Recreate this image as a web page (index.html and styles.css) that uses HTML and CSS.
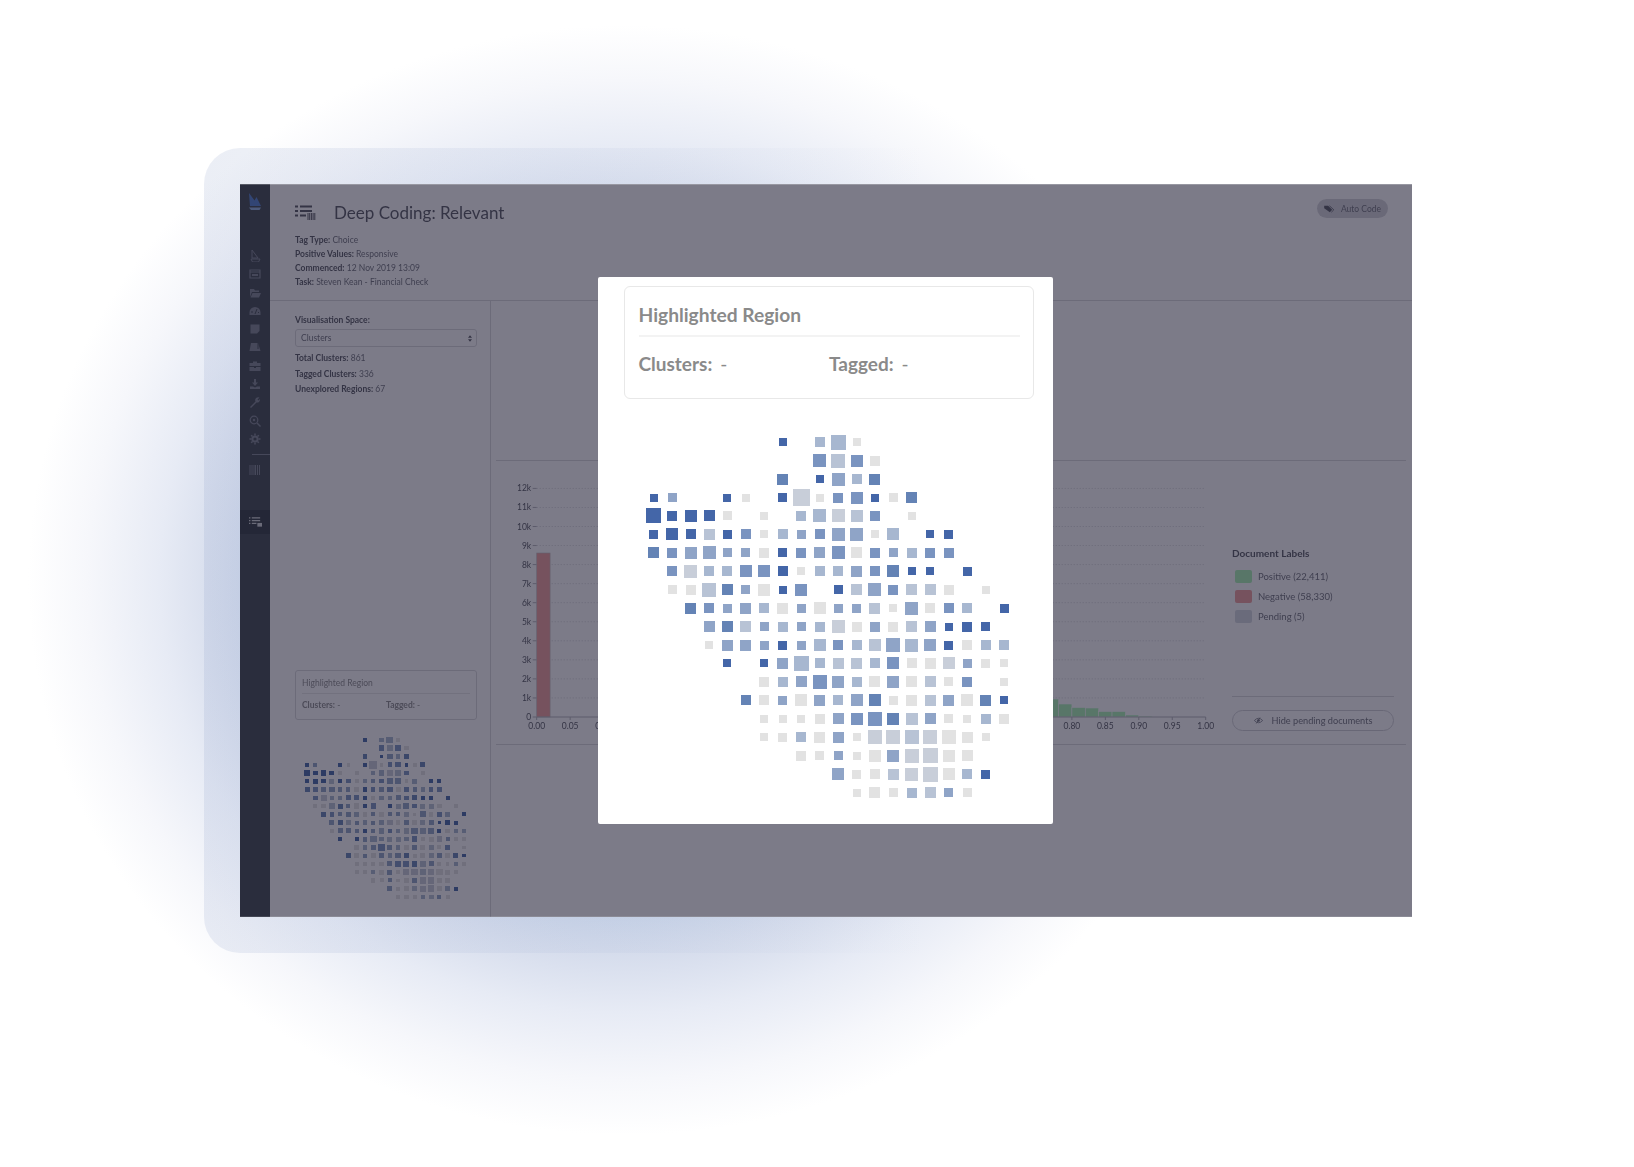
FILE: index.html
```html
<!DOCTYPE html>
<html lang="en">
<head>
    <meta charset="UTF-8">
    <meta name="viewport" content="width=device-width, initial-scale=1.0">
    <title>Deep Coding: Relevant</title>
    <link rel="stylesheet" href="styles.css">
</head>
<body>
    <div class="frame">
        <div class="window">
            <div class="app">
                <nav class="sidebar">
                    <svg class="logo" viewBox="0 0 14 18"><path d="M1 0 C3 3 5 5 6.5 7.5 L8.5 4 L13 13 H2 Z" fill="#4f7fd0"/><path d="M1 14.5 H13 L11.5 17 H3 Z" fill="#8fb0e0"/></svg>
                    <div class="nav-icons">
                        <svg class="nav-icon" viewBox="0 0 12 12"><path d="M3 0 L9 8 H3 Z M2 9 H11 L9.5 12 H3.5 Z" fill="none" stroke="currentColor" stroke-width="1"/></svg>
                        <svg class="nav-icon" viewBox="0 0 12 12"><path d="M1 2 H11 V10 H1 Z M1 4 H11" fill="none" stroke="currentColor" stroke-width="1.2"/><path d="M3 6 H9 V8 H3 Z" fill="currentColor"/></svg>
                        <svg class="nav-icon" viewBox="0 0 12 12"><path d="M1 2 H5 L6 3.5 H10 V5 H3 L1 10 Z M3.5 6 H12 L10 10.5 H1.5 Z" fill="currentColor"/></svg>
                        <svg class="nav-icon" viewBox="0 0 12 12"><path d="M6 2 A5.5 5.5 0 0 0 .5 7.5 V10 H11.5 V7.5 A5.5 5.5 0 0 0 6 2 Z" fill="currentColor"/><path d="M6 9 L8 4 M3 6 V8 M9.5 7 V8" stroke="#3d474e"/></svg>
                        <svg class="nav-icon" viewBox="0 0 12 12"><path d="M1.5 1.5 H10.5 V8 L8 10.5 H1.5 Z" fill="currentColor"/></svg>
                        <svg class="nav-icon" viewBox="0 0 12 12"><path d="M2 2 H9 L11.5 10 H.5 Z" fill="currentColor"/><path d="M9 2 L9 8" stroke="#3d474e"/></svg>
                        <svg class="nav-icon" viewBox="0 0 12 12"><path d="M4 3 V1.5 H8 V3 H11.5 V6 H.5 V3 Z M.5 7 H5 V8 H7 V7 H11.5 V11 H.5 Z" fill="currentColor"/></svg>
                        <svg class="nav-icon" viewBox="0 0 12 12"><path d="M5 1 H7 V4.5 H9 L6 8 L3 4.5 H5 Z M1 8.5 H4 L6 9.5 L8 8.5 H11 V11 H1 Z" fill="currentColor"/></svg>
                        <svg class="nav-icon" viewBox="0 0 12 12"><path d="M1 11 L6.5 5.5 A3 3 0 0 1 10.5 1.5 L8.5 3.5 L9.5 4.5 L11 3 A3 3 0 0 1 7.5 6.5 L2 12 Z" fill="currentColor"/></svg>
                        <svg class="nav-icon" viewBox="0 0 12 12"><circle cx="5" cy="5" r="3.8" fill="none" stroke="currentColor" stroke-width="1.2"/><circle cx="5" cy="5" r="1.2" fill="currentColor"/><path d="M8 8 L11.5 11.5" stroke="currentColor" stroke-width="1.4"/></svg>
                        <svg class="nav-icon" viewBox="0 0 12 12"><circle cx="6" cy="6" r="2.6" fill="none" stroke="currentColor" stroke-width="2"/><path d="M6 .5 V2.5 M6 9.5 V11.5 M.5 6 H2.5 M9.5 6 H11.5 M2.2 2.2 L3.5 3.5 M8.5 8.5 L9.8 9.8 M2.2 9.8 L3.5 8.5 M8.5 3.5 L9.8 2.2" stroke="currentColor" stroke-width="1.5"/></svg>
                    </div>
                    <div class="nav-divider"></div>
                    <svg class="nav-icon barcode" viewBox="0 0 12 12"><path d="M1 1 V11 M3 1 V11 M5 1 V11 M6.5 1 V11 M8.5 1 V11 M10.5 1 V11" stroke="currentColor" stroke-width="1"/></svg>
                    <div class="nav-active">
                        <svg class="nav-icon" viewBox="0 0 14 12"><path d="M0 1.5 H1.5 M3 1.5 H12 M0 4.5 H1.5 M3 4.5 H12 M0 7.5 H1.5 M3 7.5 H8" stroke="currentColor" stroke-width="1.2"/><path d="M9 7 H14 V11 H9 Z" fill="currentColor"/></svg>
                    </div>
                </nav>

                <main class="main">
                    <header class="page-header">
                        <div>
                            <div class="title-row">
                                <svg class="title-icon" viewBox="0 0 21 15">
                                    <path d="M0 1.5 H3 M5 1.5 H17 M0 6 H3 M5 6 H17 M0 10.5 H3 M5 10.5 H11" stroke="currentColor" stroke-width="2"/>
                                    <path d="M13 8 V15 M14.7 8 V15 M16.4 8 V15 M18.1 8 V15 M19.8 8 V15" stroke="currentColor" stroke-width="1"/>
                                </svg>
                                <h1>Deep Coding: Relevant</h1>
                            </div>
                            <div class="meta">
                                <div><b>Tag Type:</b> Choice</div>
                                <div><b>Positive Values:</b> Responsive</div>
                                <div><b>Commenced:</b> 12 Nov 2019 13:09</div>
                                <div><b>Task:</b> Steven Kean - Financial Check</div>
                            </div>
                        </div>
                        <div class="pill">
                            <svg class="pill-icon" viewBox="0 0 12 10"><path d="M0 1 H5 L10 6 L7 9 L0 4 Z" fill="currentColor"/><path d="M6.5 1 L12 6 L9 9" fill="none" stroke="currentColor"/></svg>
                            Auto Code
                        </div>
                    </header>

                    <div class="page-body">
                        <aside class="panel">
                            <label class="field-label">Visualisation Space:</label>
                            <div class="select">
                                Clusters
                                <svg class="select-arrows" viewBox="0 0 6 10"><path d="M3 0 L6 4 H0 Z M3 10 L0 6 H6 Z" fill="currentColor"/></svg>
                            </div>
                            <div class="stats">
                                <div><b>Total Clusters:</b> 861</div>
                                <div><b>Tagged Clusters:</b> 336</div>
                                <div><b>Unexplored Regions:</b> 67</div>
                            </div>
                            <div class="spacer"></div>
                            <div class="mini-card">
                                <div class="mini-title">Highlighted Region</div>
                                <div class="mini-row">
                                    <div><b>Clusters:</b> -</div>
                                    <div><b>Tagged:</b> -</div>
                                </div>
                            </div>
                            <div class="cluster-grid mini-grid" data-scale="0.448"></div>
                        </aside>

                        <section class="results">
                            <div class="chart-block">
                                <svg id="histogram" class="histogram" width="736" height="285"></svg>
                                <div class="legend">
                                    <div class="legend-title">Document Labels</div>
                                    <div class="legend-item"><span class="swatch positive"></span>Positive (22,411)</div>
                                    <div class="legend-item"><span class="swatch negative"></span>Negative (58,330)</div>
                                    <div class="legend-item"><span class="swatch pending"></span>Pending (5)</div>
                                    <div class="legend-foot">
                                        <div class="hide-btn">
                                            <svg class="eye" viewBox="0 0 12 8"><path d="M0.5 4 Q6 -2 11.5 4 Q6 10 0.5 4 Z" fill="none" stroke="currentColor"/><circle cx="6" cy="4" r="1.8" fill="currentColor"/><path d="M3 8 L8 0" stroke="currentColor"/></svg>
                                            Hide pending documents
                                        </div>
                                    </div>
                                </div>
                            </div>
                        </section>
                    </div>
                </main>
            </div>

            <div class="overlay">
                <div class="modal">
                    <div class="region-card">
                        <div class="region-title">Highlighted Region</div>
                        <div class="region-row">
                            <div><b>Clusters:</b> -</div>
                            <div><b>Tagged:</b> -</div>
                        </div>
                    </div>
                    <div class="cluster-grid modal-grid" data-scale="1"></div>
                </div>
            </div>
        </div>
    </div>

    <script src="script.js"></script>
</body>
</html>
```

FILE: styles.css
```css
* {
    box-sizing: border-box;
}
body {
    margin: 0;
    height: 1167px;
    overflow: hidden;
    font-family: Lato, "Open Sans", sans-serif;
    color: #6e7079;
    background: radial-gradient(597px 555px at 625px 580px,
        #a9bbd9 0%, #c8d3e7 60%, #d5dcec 67%, #e7ebf5 78%, #f6f7fb 90%, #fff 100%);
}
b {
    font-weight: 700;
    color: #54565f;
}
.frame {
    margin: 148px 0 0 204px;
    width: 1208px;
    height: 805px;
    padding: 36px 0 36px 36px;
    border-radius: 36px 0 0 36px;
    background: linear-gradient(90deg, rgba(130, 150, 195, 0.16), rgba(130, 150, 195, 0) 60%);
}
.window {
    position: relative;
    height: 733px;
    background: #fff;
    overflow: hidden;
}
.app {
    display: flex;
    height: 100%;
    filter: blur(0.4px);
}
.overlay {
    position: absolute;
    inset: 0;
    display: flex;
    justify-content: center;
    align-items: flex-start;
    padding: 93px 2px 0 0;
    background: rgba(30, 28, 50, 0.58);
    box-shadow: inset 0 1px 0 rgba(255, 255, 255, 0.22), inset 0 -1px 0 rgba(255, 255, 255, 0.12);
}

/* sidebar */
.sidebar {
    width: 30px;
    flex-shrink: 0;
    background: #3d474e;
    color: #7f8592;
    display: flex;
    flex-direction: column;
    align-items: center;
    padding-top: 9px;
}
.logo {
    width: 14px;
    height: 18px;
}
.nav-icons {
    display: flex;
    flex-direction: column;
    gap: 6.3px;
    margin-top: 39px;
}
.nav-icon {
    display: block;
    width: 12px;
    height: 12px;
}
.nav-divider {
    align-self: flex-end;
    width: 18px;
    height: 1px;
    margin-top: 9px;
    background: #7f8592;
}
.barcode {
    margin-top: 9px;
}
.nav-active {
    align-self: stretch;
    height: 24px;
    margin-top: 34px;
    background: #2f383e;
    color: #d5d8dc;
    display: flex;
    align-items: center;
    justify-content: center;
}
.nav-active .nav-icon {
    width: 13px;
}

/* header */
.main {
    flex: 1;
    display: flex;
    flex-direction: column;
    min-width: 0;
}
.page-header {
    height: 117px;
    flex-shrink: 0;
    display: flex;
    justify-content: space-between;
    align-items: flex-start;
    padding: 15px 24px 0 25px;
    border-bottom: 1px solid #d8d8dc;
}
.title-row {
    display: flex;
    align-items: center;
    height: 26px;
}
.title-icon {
    width: 21px;
    height: 15px;
    margin-right: 18px;
    color: #54565f;
}
h1 {
    margin: 0;
    font-size: 17px;
    font-weight: 400;
    color: #54565f;
}
.meta {
    margin-top: 8px;
    font-size: 8.5px;
    line-height: 14px;
}
.pill {
    display: flex;
    align-items: center;
    gap: 7px;
    height: 19px;
    margin: 0;
    padding: 0 7px;
    border-radius: 10px;
    background: #d5d5da;
    font-size: 8.5px;
    color: #6e7079;
}
.pill-icon {
    width: 10px;
    height: 8px;
    color: #54565f;
}

/* left panel */
.page-body {
    flex: 1;
    display: flex;
    min-height: 0;
}
.panel {
    width: 221px;
    flex-shrink: 0;
    display: flex;
    flex-direction: column;
    padding: 13px 13px 0 25px;
    border-right: 1px solid #d8d8dc;
}
.field-label {
    font-size: 8.5px;
    line-height: 12px;
    font-weight: 700;
    color: #54565f;
}
.select {
    display: flex;
    justify-content: space-between;
    align-items: center;
    height: 18px;
    margin-top: 3px;
    padding: 0 4px 0 5px;
    border: 1px solid #d8d8dc;
    border-radius: 3px;
    font-size: 8.5px;
}
.select-arrows {
    width: 4px;
    height: 7px;
    color: #54565f;
}
.stats {
    margin-top: 4px;
    font-size: 8.5px;
    line-height: 15.6px;
}
.spacer {
    height: 272px;
    flex-shrink: 0;
}
.mini-card {
    height: 50px;
    padding: 6px 6px 0;
    border: 1px solid #d8d8dc;
    border-radius: 3px;
    color: #8d8d8d;
    font-size: 8.5px;
}
.mini-card b {
    color: #8d8d8d;
}
.mini-title {
    height: 17px;
    line-height: 13px;
    border-bottom: 1px solid #e8e8e8;
}
.mini-row {
    display: grid;
    grid-template-columns: 1fr 1fr;
    margin-top: 6px;
}

/* cluster squares */
.cluster-grid {
    display: grid;
    grid-template-columns: repeat(20, var(--cell));
    grid-auto-rows: var(--cell);
    place-items: center;
    width: max-content;
    filter: blur(0.4px);
}
.modal-grid {
    --cell: 18.45px;
    margin: 34px 0 0 21px;
}
.mini-grid {
    --cell: 8.27px;
    margin: 16px 0 0 8px;
}
.sq-a { background: #4466a8; }
.sq-b { background: #6483b5; }
.sq-c { background: #7a94c0; }
.sq-d { background: #8fa4c7; }
.sq-e { background: #a7b7d0; }
.sq-f { background: #b8c3d5; }
.sq-g { background: #c8ced9; }
.sq-h { background: #e2e2e2; }

/* chart */
.results {
    flex: 1;
    padding: 159px 6px 0 5px;
}
.chart-block {
    display: flex;
    height: 285px;
    border-top: 1px solid #d8d8dc;
    border-bottom: 1px solid #d8d8dc;
}
.histogram {
    display: block;
    flex-shrink: 0;
    margin-top: -1px;
}
.histogram text {
    font-family: Lato, sans-serif;
    font-size: 8.5px;
    fill: #54565f;
}
.grid-line {
    stroke: #d4d4d8;
    stroke-dasharray: 1 2;
}
.axis-line {
    stroke: #b4b4ba;
}
.bar-neg {
    fill: #f09d9b;
    stroke: #c0c0c4;
    stroke-width: 0.6;
}
.bar-pos {
    fill: #a9f2b4;
    stroke: #fff;
    stroke-width: 0.6;
}
.legend {
    width: 162px;
    display: flex;
    flex-direction: column;
    padding-top: 85px;
    font-size: 9.5px;
}
.legend-title {
    height: 14px;
    line-height: 14px;
    margin-bottom: 6.5px;
    font-size: 10px;
    font-weight: 700;
    color: #54565f;
}
.legend-item {
    display: flex;
    align-items: center;
    height: 20px;
}
.swatch {
    width: 17px;
    height: 13px;
    margin: 0 6px 0 3px;
    border-radius: 2px;
}
.positive { background: #a9f2b4; }
.negative { background: #f09d9b; }
.pending { background: #d5d9df; }
.legend-foot {
    margin-top: auto;
    margin-bottom: 13px;
    padding-top: 13px;
    border-top: 1px solid #d8d8dc;
}
.hide-btn {
    display: flex;
    justify-content: center;
    align-items: center;
    gap: 9px;
    height: 21px;
    border: 1px solid #d0d0d5;
    border-radius: 11px;
    font-size: 9.2px;
}
.eye {
    width: 9px;
    height: 7px;
}

/* modal */
.modal {
    width: 455px;
    height: 547px;
    padding: 9px 19px 0 26px;
    background: #fff;
    border-radius: 2px;
}
.region-card {
    height: 113px;
    padding: 15px 13px 0 14px;
    border: 1px solid #e8e8e8;
    border-radius: 6px;
    color: #8a8a8a;
}
.region-card b {
    color: #8a8a8a;
}
.region-title {
    height: 35px;
    line-height: 26px;
    font-size: 19.2px;
    font-weight: 700;
    border-bottom: 2px solid #f3f3f3;
}
.region-row {
    display: grid;
    grid-template-columns: 1fr 1fr;
    margin-top: 14px;
    font-size: 19px;
    line-height: 26px;
}
.region-row b {
    margin-right: 3px;
}
```

FILE: script.js
```js
// each row: column, colour level, square size in px at full scale
const rows = [
    '7a8 9e10 10e15 11h8',
    '9c13 10f14 11c12 12h10',
    '7b11 9a8 10d13 11e10 12b11',
    '0a8 1d9 4a8 5h8 7a9 8g17 9h8 10c10 11c12 12a8 13h9 14b11',
    '0a15 1a10 2a12 3a11 4h9 6h8 8e10 9e13 10g13 11f12 12c10 14h8',
    '0a9 1a12 2a10 3f11 4a9 5c10 6h8 7e10 8d9 9c10 10d13 11d13 12h8 13e12 15a8 16a9',
    '0b11 1c10 2d12 3d13 4d9 5d9 6h10 7a9 8c10 9d11 10c13 11h11 12c10 13d9 14e10 15c10 16c10',
    '1c10 2g13 3e10 4e10 5c12 6c12 7a10 8h8 9e10 10e10 11d11 12c10 13b12 14a8 15a8 17a9',
    '1h9 2h10 3f14 4b11 5d9 6h12 7a8 8c12 10a9 11f11 12d13 13c10 14f11 15f11 16h10 18h8',
    '2b11 3c10 4d9 5d11 6e10 7h11 8d9 9h12 10d9 11d9 12f11 13h8 14d13 15h10 16c10 17e10 19a9',
    '3d11 4b11 5f11 6d9 7e10 8d9 9e10 10g13 11h10 12d10 13h10 14f11 15d11 16a8 17a10 18a9',
    '3h8 4d11 5d11 6d9 7a9 8d9 9e12 10c10 11e10 12f12 13d14 14e13 15d12 16a9 17h10 18e10 19e10',
    '4a8 6a8 7d11 8e15 9e10 10f11 11f11 12e10 13c12 14h10 15h11 16g12 17d9 18h9 19h8',
    '6h10 7e10 8d11 9c14 10d12 11e10 12h11 13d12 14h11 15f11 16h9 17c10 19h8',
    '5b10 6h10 7d9 8h12 9d11 10e10 11d12 12b12 13h9 14h11 15f11 16d11 17h12 18b11 19a8',
    '6h8 7h8 8h8 9h10 10d11 11c12 12c14 13b12 14f12 15d11 16h9 17h8 18e10 19h10',
    '6h8 7h9 8e10 9h11 10d11 11h8 12g14 13g14 14f14 15g14 16h14 17h11 18h8',
    '8h10 9h9 10d9 11h8 12h12 13d12 14g14 15g15 16h12 17h11',
    '10d12 11h9 12h10 13f11 14g13 15g15 16h12 17e10 18a9',
    '11h8 12h11 13h9 14e10 15f11 16d9 17h9'
];

document.querySelectorAll('.cluster-grid').forEach(grid => {
    const scale = parseFloat(grid.dataset.scale);

    rows.forEach((row, rowIndex) => {
        row.split(' ').forEach(cell => {
            const [, col, level, size] = cell.match(/(\d+)([a-h])(\d+)/);
            const square = document.createElement('div');
            square.className = `sq-${level}`;
            square.style.gridColumn = Number(col) + 1;
            square.style.gridRow = rowIndex + 1;
            square.style.width = `${size * scale}px`;
            square.style.height = `${size * scale}px`;
            grid.appendChild(square);
        });
    });
});

// histogram
const svg = document.getElementById('histogram');
const NS = 'http://www.w3.org/2000/svg';
const originX = 40.7;
const baseY = 257;
const stepX = 33.45;
const stepY = 19.05;

function add(tag, attrs, text) {
    const el = document.createElementNS(NS, tag);
    Object.keys(attrs).forEach(key => el.setAttribute(key, attrs[key]));
    if (text) el.textContent = text;
    svg.appendChild(el);
}

for (let i = 0; i <= 12; i++) {
    const y = baseY - i * stepY;
    if (i > 0) {
        add('line', { x1: originX, x2: originX + 20 * stepX, y1: y, y2: y, class: 'grid-line' });
    }
    add('line', { x1: originX - 4, x2: originX, y1: y, y2: y, class: 'axis-line' });
    add('text', { x: originX - 5.5, y: y + 3, 'text-anchor': 'end' }, i === 0 ? '0' : `${i}k`);
}

add('rect', { x: originX, y: baseY - 164, width: 13.4, height: 164, class: 'bar-neg' });

// right tail of the positive bars: [bar index, height]
[[38, 18], [39, 13], [40, 9.5], [41, 9], [42, 5.5], [43, 5.5], [44, 2], [45, 1]].forEach(([index, height]) => {
    add('rect', { x: originX + index * 13.38, y: baseY - height, width: 13.38, height, class: 'bar-pos' });
});

add('line', { x1: originX, x2: originX + 20 * stepX, y1: baseY, y2: baseY, class: 'axis-line' });

for (let i = 0; i <= 20; i++) {
    const x = originX + i * stepX;
    add('line', { x1: x, x2: x, y1: baseY, y2: baseY + 3, class: 'axis-line' });
    add('text', { x, y: baseY + 11.5, 'text-anchor': 'middle' }, (i * 0.05).toFixed(2));
}
```
